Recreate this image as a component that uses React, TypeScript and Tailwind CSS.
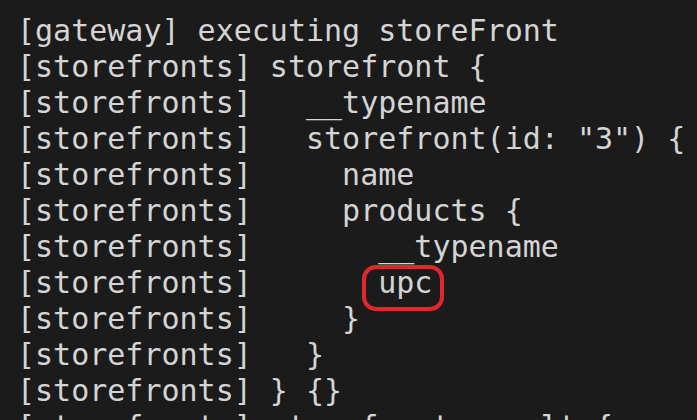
import React from "react";

const lines: (string | null)[] = [
  "[gateway] executing storeFront",
  "[storefronts] storefront {",
  "[storefronts]   __typename",
  '[storefronts]   storefront(id: "3") {',
  "[storefronts]     name",
  "[storefronts]     products {",
  "[storefronts]       __typename",
  null,
  "[storefronts]     }",
  "[storefronts]   }",
  "[storefronts] } {}",
  "[storefronts] storefront result {",
];

export default function App() {
  return (
    <div
      className="w-[697px] h-[420px] overflow-hidden bg-[#1b1b1b] text-[#d4d4d4] pl-[17px] pt-[13px] text-[30px] leading-[36px] whitespace-pre"
      style={{ fontFamily: '"DejaVu Sans Mono", "Liberation Mono", monospace' }}
    >
      {lines.map((l, i) =>
        l === null ? (
          <div key={i}>
            {"[storefronts]       "}
            <span className="relative">
              upc
              <span className="absolute left-[-16px] right-[-12px] top-[0px] bottom-[-11px] border-4 border-[#e0282c] rounded-[14px]"></span>
            </span>
          </div>
        ) : (
          <div key={i}>{l}</div>
        )
      )}
    </div>
  );
}
